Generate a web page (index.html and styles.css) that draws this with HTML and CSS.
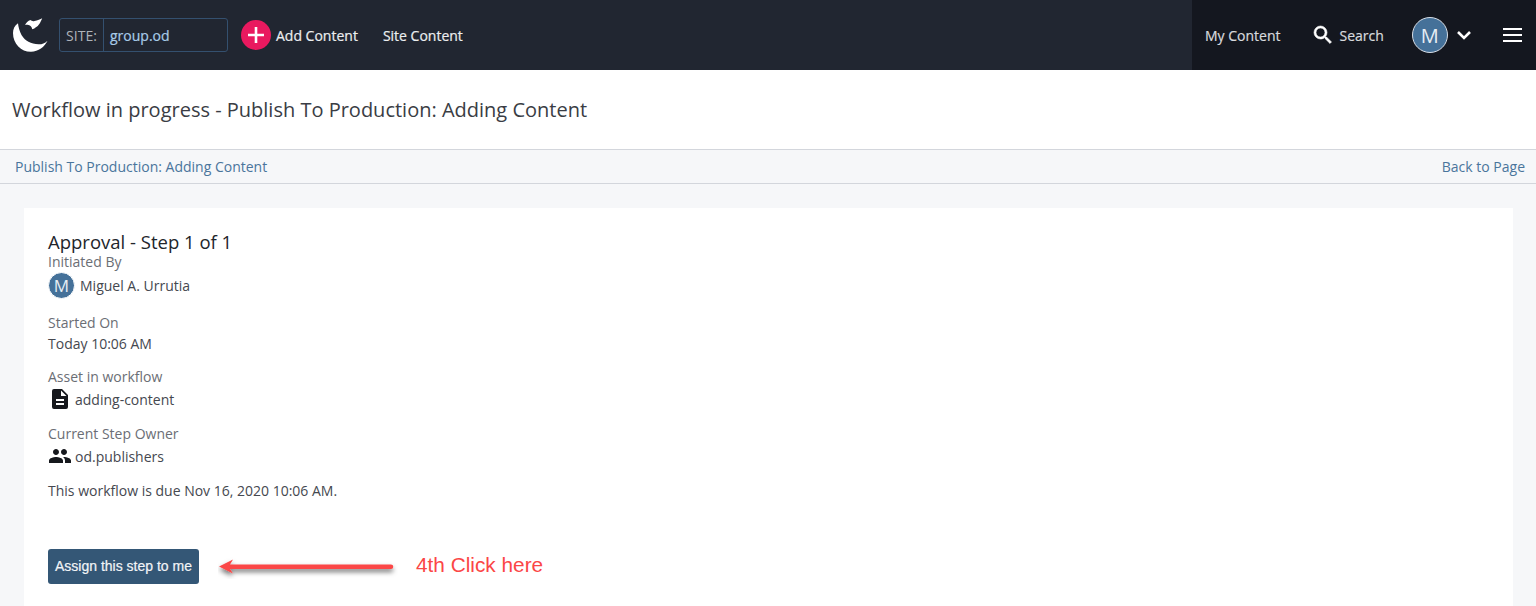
FILE: index.html
```html
<!DOCTYPE html>
<html lang="en">
<head>
<meta charset="utf-8">
<title>Workflow in progress</title>
<link rel="stylesheet" href="styles.css">
</head>
<body>
<header class="topbar">
  <div class="topbar-left">
    <svg class="logo" viewBox="0 0 36 36" width="36" height="36"><path fill="#fff" d="M5 6.300C1.500 9 0 12 0 16 0 27 8.500 35 18 34.800 25.500 34.500 31.500 30 34.500 23.700 31.500 26.500 28.500 27.500 25.500 27.300 18 27 12 24 8.500 18 6.500 14 5.300 10 5 6.300Z"/><path fill="#fff" d="M12 8C13 6 15 3.500 17.500 3c1 1 2.500 1.500 4 1 3-.5 6-1.500 7.700-2.700C27.500 5 26 9 22.500 10.500c-1 1-2.500 1.500-3.300 1.800-.2-2.300-1.700-3.800-3.700-4.300-1.500-.4-2.300-.3-3.500 0Z"/></svg>
    <div class="site-box"><span class="site-label">SITE:</span><span class="site-value">group.od</span></div>
    <a class="add-btn"><span class="plus"><svg viewBox="0 0 30 30" width="30" height="30"><path d="M15 7v16M7 15h16" stroke="#fff" stroke-width="2.600" fill="none"/></svg></span>Add Content</a>
    <a class="nav-link">Site Content</a>
  </div>
  <div class="topbar-right">
    <a class="nav-link my">My Content</a>
    <a class="nav-link search"><svg viewBox="0 0 24 24" width="24" height="24"><path fill="#fff" stroke="#fff" stroke-width=".6" d="M15.500 14h-.79l-.28-.27A6.470 6.470 0 0 0 16 9.500 6.500 6.500 0 1 0 9.500 16c1.610 0 3.090-.59 4.230-1.570l.27.28v.79l5 4.990L20.490 19l-4.990-5Zm-6 0C7.010 14 5 11.990 5 9.500S7.010 5 9.500 5 14 7.010 14 9.500 11.990 14 9.500 14Z"/></svg>Search</a>
    <span class="avatar">M</span>
    <svg class="chev" viewBox="0 0 14 10" width="14" height="10"><path d="M1 2l6 6 6-6" stroke="#fff" stroke-width="2.600" fill="none"/></svg>
    <svg class="burger" viewBox="0 0 20 14" width="20" height="14"><path d="M0 1h19M0 7h19M0 13h19" stroke="#fff" stroke-width="2"/></svg>
  </div>
</header>
<div class="title-row"><h1>Workflow in progress - Publish To Production: Adding Content</h1></div>
<div class="crumb-row"><a>Publish To Production: Adding Content</a><a>Back to Page</a></div>
<main class="content">
  <section class="card">
    <h2>Approval - Step 1 of 1</h2>
    <div class="label">Initiated By</div>
    <div class="value user"><span class="avatar small">M</span>Miguel A. Urrutia</div>
    <div class="label started">Started On</div>
    <div class="value">Today 10:06 AM</div>
    <div class="label asset">Asset in workflow</div>
    <div class="value icon-row"><svg viewBox="0 0 24 24" width="24" height="24"><path fill="#16181d" d="M14 2H6a2 2 0 0 0-2 2v16a2 2 0 0 0 2 2h12a2 2 0 0 0 2-2V8l-6-6Zm2 16H8v-2h8v2Zm0-4H8v-2h8v2Zm-3-5V3.500L18.500 9H13Z"/></svg>adding-content</div>
    <div class="label owner">Current Step Owner</div>
    <div class="value icon-row"><svg viewBox="0 0 24 24" width="24" height="24"><path fill="#16181d" d="M16 11c1.660 0 2.990-1.340 2.990-3S17.660 5 16 5s-3 1.340-3 3 1.340 3 3 3Zm-8 0c1.660 0 2.990-1.340 2.990-3S9.660 5 8 5 5 6.340 5 8s1.340 3 3 3Zm0 2c-2.330 0-7 1.170-7 3.500V19h14v-2.500C15 14.170 10.330 13 8 13Zm8 0c-.29 0-.62.020-.97.050 1.160.84 1.970 1.970 1.970 3.450V19h6v-2.500c0-2.330-4.670-3.500-7-3.500Z"/></svg>od.publishers</div>
    <p class="due">This workflow is due Nov 16, 2020 10:06 AM.</p>
    <div class="action-row">
      <button class="assign">Assign this step to me</button>
      <svg class="arrow" viewBox="0 0 180 24" width="180" height="24"><defs><filter id="s" x="-10%" y="-50%" width="120%" height="250%"><feDropShadow dx="0" dy="3" stdDeviation="2.500" flood-color="#000" flood-opacity=".55"/></filter></defs><path filter="url(#s)" fill="#fb4646" d="M1 11.500 15 4.500 12 9.500H173a2.250 2.250 0 0 1 0 4.500H12L15 18.500Z"/></svg>
      <span class="note">4th Click here</span>
    </div>
  </section>
</main>
</body>
</html>
```
FILE: styles.css
```css
* { box-sizing: border-box; }
html, body { margin: 0; height: 606px; overflow: hidden; }
body { font-family: "Open Sans", sans-serif; font-size: 14px; color: #45484f; background: #f6f7f9; }
.topbar { height: 70px; background: #212631; display: flex; justify-content: space-between; color: #eceef0; }
.topbar-left { display: flex; align-items: center; padding-left: 13px; }
.logo { margin-right: 10px; flex: none; }
.site-box { width: 169px; height: 34px; border: 1px solid #34506f; border-radius: 3px; display: flex; align-items: center; margin-right: 13px; }
.site-label { width: 44px; height: 100%; border-right: 1px solid #34506f; display: flex; align-items: center; justify-content: center; color: #aeb3ba; }
.site-value { padding-left: 6px; color: #a8cbe8; -webkit-text-stroke: .2px #a8cbe8; }
.add-btn { display: flex; align-items: center; margin-right: 25px; -webkit-text-stroke: .2px #eceef0; }
.plus { width: 30px; height: 30px; border-radius: 50%; background: #e9195f; margin-right: 5px; display: block; }
.plus svg { display: block; }
.nav-link { display: flex; align-items: center; -webkit-text-stroke: .2px #eceef0; }
.topbar-right { width: 344px; background: #14171f; display: flex; align-items: center; padding-left: 13px; }
.my { margin-right: 30px; color: #d8dade; -webkit-text-stroke: .2px #d8dade; }
.search { margin-right: 28px; color: #d8dade; -webkit-text-stroke: .2px #d8dade; }
.search svg { margin-right: 5px; }
.avatar { width: 36px; height: 36px; border-radius: 50%; background: #457199; border: 1px solid #d8dee6; color: #e6edf4; font-size: 20px; display: flex; align-items: center; justify-content: center; flex: none; }
.chev { margin-left: 9px; }
.burger { margin-left: 32px; }
.title-row { height: 80px; background: #fff; border-bottom: 1px solid #d3d6dc; display: flex; align-items: center; padding: 0 12px 0; }
h1 { font-size: 20px; font-weight: 400; margin: 0; color: #3a3d44; }
.crumb-row { height: 34px; border-bottom: 1px solid #d3d6dc; display: flex; justify-content: space-between; align-items: center; padding: 0 11px 0 15px; color: #4a759c; }
.content { padding: 24px 23px 0 24px; }
.card { background: #fff; height: 420px; padding: 23px 24px; }
h2 { font-size: 18.500px; font-weight: 400; margin: 0; line-height: 21px; color: #22252b; }
.label { color: #6b6e75; line-height: 19px; }
.value { line-height: 19px; color: #45484f; }
.user { display: flex; align-items: center; height: 26px; margin-top: 1px; }
.avatar.small { width: 27px; height: 27px; font-size: 17px; margin-right: 5px; border-color: #fff; }
.started { margin-top: 15px; }
.started + .value { margin-top: 2px; }
.asset { margin-top: 14px; }
.owner { margin-top: 12px; }
.icon-row { display: flex; align-items: center; height: 26px; margin-top: 0; }
.icon-row svg { margin-right: 3px; flex: none; }
.due { margin: 12px 0 0; line-height: 19px; }
.action-row { display: flex; align-items: center; margin-top: 49px; }
.assign { width: 151px; height: 35px; padding: 0 0 2px; border: 0; border-radius: 3px; background: #345776; color: #f2f4f6; font: 14px "Liberation Sans", Arial, sans-serif; -webkit-text-stroke: .2px #f2f4f6; }
.arrow { margin-left: 19px; flex: none; }
.note { margin-left: 18px; font-family: "Liberation Sans", Arial, sans-serif; font-size: 20.800px; color: #fb4646; position: relative; top: -2px; }
```
